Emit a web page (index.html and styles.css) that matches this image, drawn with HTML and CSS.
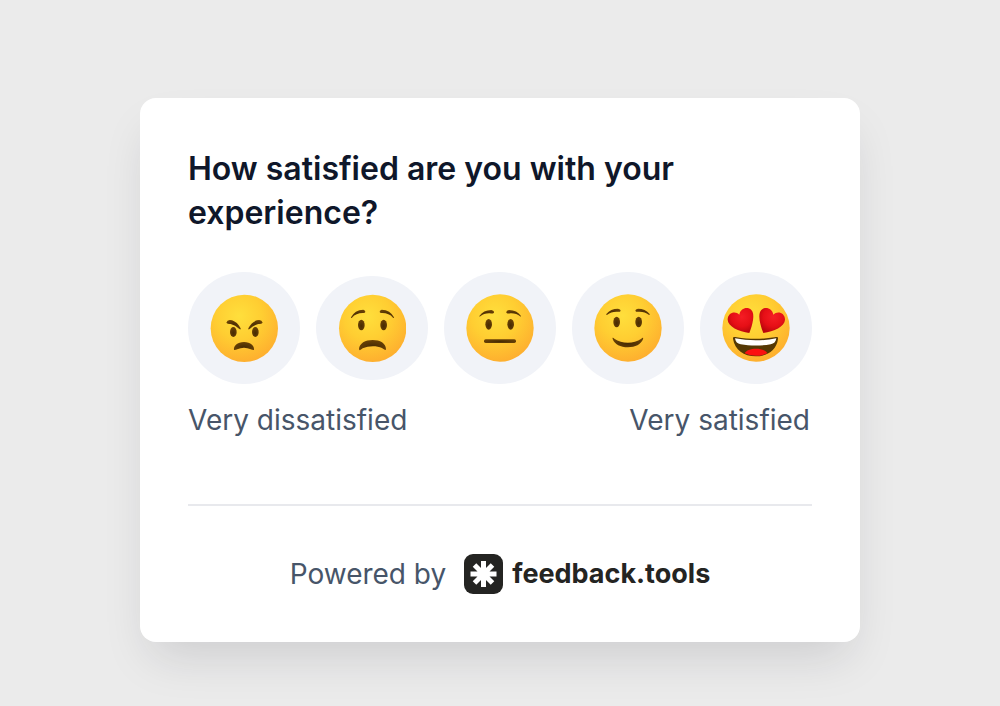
FILE: index.html
```
<!DOCTYPE html>
<html lang="en">
  <head>
    <meta charset="UTF-8" />
    <meta name="viewport" content="width=device-width, initial-scale=1.0" />
    <title>Feedback</title>
    <link rel="stylesheet" href="styles.css">
  </head>
  <body>
    <!-- Shared gradients -->
    <svg class="defs" aria-hidden="true">
      <defs>
        <radialGradient id="face" cx="0.42" cy="0.32" r="0.68">
          <stop offset="0" stop-color="#ffdf3c" />
          <stop offset="0.5" stop-color="#ffce32" />
          <stop offset="1" stop-color="#feb02f" />
        </radialGradient>
        <radialGradient id="brown" cx="0.5" cy="0.6" r="0.6">
          <stop offset="0" stop-color="#472b03" />
          <stop offset="1" stop-color="#6b4205" />
        </radialGradient>
        <radialGradient id="heart" cx="0.55" cy="0.35" r="0.65">
          <stop offset="0" stop-color="#f51d24" />
          <stop offset="0.6" stop-color="#e60f16" />
          <stop offset="1" stop-color="#b9060c" />
        </radialGradient>
      </defs>
    </svg>

    <main class="card">
      <h1 class="question">How satisfied are you with your experience?</h1>

      <div class="ratings">
        <button class="rating" type="button" aria-label="Very dissatisfied">
          <svg viewBox="0 0 204 204">
            <circle cx="103" cy="103" r="101" fill="url(#face)" />
            <g fill="url(#brown)">
              <ellipse cx="70" cy="114" rx="10" ry="15" />
              <ellipse cx="136" cy="114" rx="10" ry="15" />
              <path d="M49 86Q52 75 66 79Q82 84 92 103Q93 108 88 105Q76 93 62 90Q53 91 49 86Z" />
              <path d="M158 86Q155 75 141 79Q125 84 115 103Q114 108 119 105Q131 93 145 90Q154 91 158 86Z" />
              <path d="M72 168C70 156 82 144 102 144C122 144 134 156 132 168C128 170 118 161 102 161C86 161 76 170 72 168Z" />
            </g>
          </svg>
        </button>
        <button class="rating rating-short" type="button" aria-label="Dissatisfied">
          <svg viewBox="0 0 204 204">
            <circle cx="104" cy="103" r="101" fill="url(#face)" />
            <g fill="url(#brown)">
              <ellipse cx="70" cy="93" rx="10" ry="16" />
              <ellipse cx="137" cy="93" rx="10" ry="16" />
              <path d="M39 70Q50 48 76 47Q83 49 82 54Q81 58 74 57Q54 57 42 71Q38 74 39 70Z" />
              <path d="M168 70Q157 48 131 47Q124 49 125 54Q126 58 133 57Q153 57 165 71Q169 74 168 70Z" />
              <path d="M63 165C64 148 82 138 104 138C126 138 144 148 144 165C144 171 138 166 132 162C116 155 92 155 74 163C68 167 64 172 63 165Z" />
            </g>
          </svg>
        </button>
        <button class="rating" type="button" aria-label="Neutral">
          <svg viewBox="0 0 204 204">
            <circle cx="102" cy="102" r="101" fill="url(#face)" />
            <g fill="url(#brown)">
              <ellipse cx="68" cy="91" rx="10" ry="16" />
              <ellipse cx="134" cy="91" rx="10" ry="16" />
              <path d="M40 66Q52 48 76 48Q85 50 84 56Q80 60 72 58Q54 57 43 67Q39 69 40 66Z" />
              <path d="M165 66Q153 48 129 48Q120 50 121 56Q125 60 133 58Q151 57 162 67Q166 69 165 66Z" />
              <rect x="54" y="136" width="96" height="11" rx="5" />
            </g>
          </svg>
        </button>
        <button class="rating" type="button" aria-label="Satisfied">
          <svg viewBox="0 0 204 204">
            <circle cx="102" cy="102" r="101" fill="url(#face)" />
            <g fill="url(#brown)">
              <ellipse cx="68" cy="84" rx="10" ry="16" />
              <ellipse cx="134" cy="84" rx="10" ry="16" />
              <path d="M37 60Q50 44 72 44Q80 45 80 50Q78 55 70 53Q52 52 40 62Q36 64 37 60Z" />
              <path d="M167 60Q154 44 132 44Q124 45 124 50Q126 55 134 53Q152 52 164 62Q168 64 167 60Z" />
              <path d="M56 135C54 129 59 132 61 134C84 150 119 150 142 134C145 131 149 129 147 136C141 151 124 160 102 160C79 160 62 151 56 135Z" />
            </g>
          </svg>
        </button>
        <button class="rating" type="button" aria-label="Very satisfied">
          <svg viewBox="0 0 204 204">
            <circle cx="102" cy="102" r="101" fill="url(#face)" />
            <path fill="url(#heart)" d="M82 117C50 112 18 98 17 77C17 56 40 49 52 62C55 43 76 36 88 48C100 60 92 92 82 117Z" />
            <path fill="url(#heart)" d="M124 117C156 112 188 98 189 77C189 56 166 49 154 62C151 43 130 36 118 48C106 60 114 92 124 117Z" />
            <path fill="#553804" d="M33 134C33 127 38 129 44 130C80 136 124 136 158 130C165 128 169 128 168 135C164 168 136 187 101 187C66 187 38 168 33 134Z" />
            <path fill="#ffffff" d="M39 133C80 141 122 141 163 133C161 144 156 149 146 151C118 156 84 156 56 151C46 149 41 144 39 133Z" />
            <path fill="#fb1010" d="M68 178C72 169 86 164 102 164C118 164 132 169 136 178C115 188 89 188 68 178Z" />
          </svg>
        </button>
      </div>

      <div class="scale">
        <span>Very dissatisfied</span>
        <span>Very satisfied</span>
      </div>

      <footer class="footer">
        <span>Powered by</span>
        <a class="brand" href="#">
          <svg class="brand-icon" viewBox="0 0 40 40" aria-hidden="true">
            <rect width="39" height="40" rx="9" fill="#242422" />
            <path d="M19.500 7v26M6.500 20h26M10.500 11l18 18M28.500 11l-18 18" stroke="#fff" stroke-width="5" />
          </svg>
          <span>feedback.tools</span>
        </a>
      </footer>
    </main>
  </body>
</html>
```
FILE: styles.css
```
* {
  box-sizing: border-box;
}

body {
  margin: 0;
  padding: 98px 24px 64px;
  background-color: #ebebeb;
  font-family: Inter, sans-serif;
  color: #475569;
}

.defs {
  position: absolute;
  width: 0;
  height: 0;
}

.card {
  max-width: 720px;
  margin: 0 auto;
  padding: 49px 48px 48px;
  border-radius: 16px;
  background-color: #fff;
  box-shadow: 0 24px 48px -12px rgba(24, 24, 40, 0.15);
}

.question {
  margin: 0 0 37px;
  font-size: 32px;
  font-weight: 600;
  line-height: 44px;
  color: #0f172a;
}

.ratings {
  display: flex;
  justify-content: space-between;
  align-items: center;
}

.rating {
  display: flex;
  justify-content: center;
  align-items: center;
  width: 112px;
  height: 112px;
  padding: 0;
  border: none;
  border-radius: 50%;
  background-color: #f1f3f8;
  cursor: pointer;
}

.rating-short {
  height: 104px;
}

.rating svg {
  width: 68px;
  height: 68px;
}

.scale {
  display: flex;
  justify-content: space-between;
  margin-top: 16px;
  padding-right: 2px;
  font-size: 28px;
  line-height: 40px;
}

.footer {
  display: flex;
  justify-content: center;
  align-items: center;
  gap: 18px;
  margin-top: 64px;
  padding-top: 48px;
  border-top: 2px solid #e8e9ed;
  font-size: 28px;
  line-height: 40px;
}

.brand {
  display: flex;
  align-items: center;
  gap: 8px;
  font-size: 27px;
  font-weight: 700;
  color: #242422;
  text-decoration: none;
}

.brand-icon {
  width: 40px;
  height: 40px;
}
```
